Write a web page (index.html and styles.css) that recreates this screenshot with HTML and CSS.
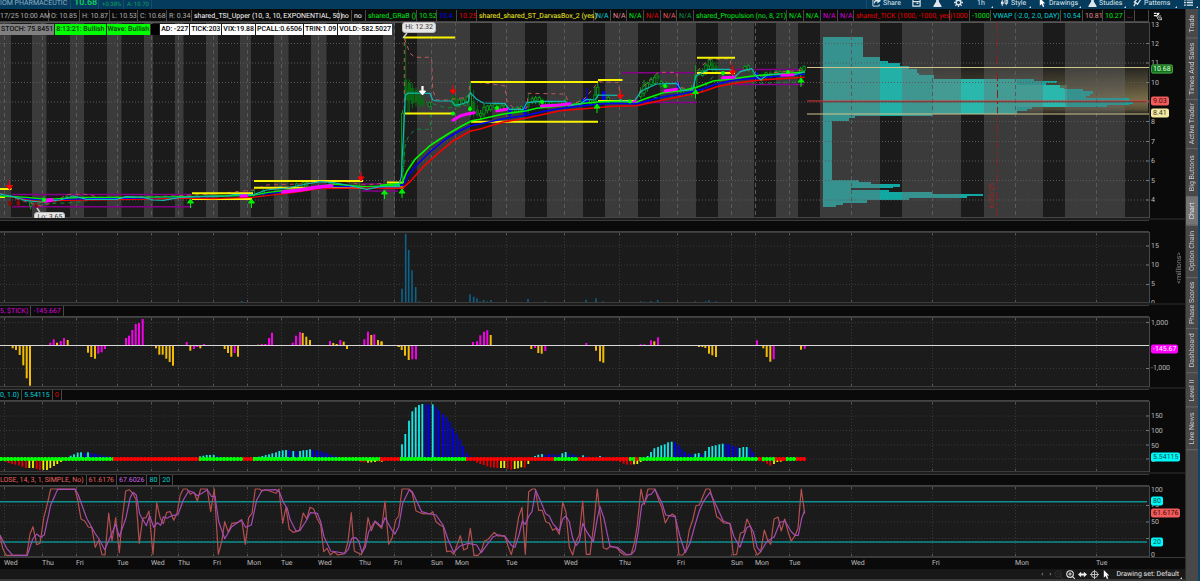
FILE: index.html
```
<!DOCTYPE html>
<html lang="en">
<head>
<meta charset="utf-8">
<title>Chart workspace</title>
<link rel="stylesheet" href="styles.css">
</head>
<body>
<header class="topbar">
  <div class="quote">
    <span class="company">IOM PHARMACEUTIC</span>
    <strong class="last">10.68</strong>
    <span class="pair"><span>+.04</span><span>+0.38%</span></span>
    <span class="pair bidask"><span>B: 10.65</span><span>A: 10.70</span></span>
  </div>
  <div class="tools">
    <button class="tool share"><svg class="ico" viewBox="0 0 10 10"><path d="M6 0l4 3-4 3V4C3 4 3 6 3 7 1 4 3 2 6 2z" fill="#dce6ec"/><path d="M2 2H1v7h7V7" fill="none" stroke="#dce6ec"/></svg>Share</button>
    <button class="tool cal" aria-label="Calendar"><svg class="ico" viewBox="0 0 10 10"><path d="M1 1h8v8H1zM1 4h8M5 6h2" fill="none" stroke="#dce6ec" stroke-width="1.3"/></svg></button>
    <button class="tool lab" aria-label="Add study"><svg class="ico" viewBox="0 0 10 10"><path d="M3 0h4v1H6.500v3L9.500 9v1H.5V9l3-5V1H3z" fill="#dce6ec"/></svg></button>
    <button class="tool gear" aria-label="Settings"><svg class="ico" viewBox="0 0 10 10"><circle cx="5" cy="5" r="2.500" fill="none" stroke="#dce6ec" stroke-width="1.600"/><path d="M5 0v2M5 8v2M0 5h2M8 5h2M1.500 1.500l1.400 1.400M7.100 7.100l1.400 1.400M8.500 1.500L7.100 2.900M2.900 7.100L1.500 8.500" stroke="#dce6ec" stroke-width="1.500"/></svg></button>
    <button class="tool hour more">1h</button>
    <button class="tool style more"><svg class="ico" viewBox="0 0 10 10"><path d="M2.500 2v7M7 0v8" stroke="#dce6ec"/><path d="M1 4h3v3H1z" fill="#dce6ec"/><path d="M5.500 2h3v4h-3z" fill="none" stroke="#dce6ec"/></svg>Style</button>
    <button class="tool draw more"><svg class="ico" viewBox="0 0 10 10"><path d="M2 0l6 6H5.500L7 9.500l-1.500.5L4 6.800 2 8.500z" fill="#fff"/></svg>Drawings</button>
    <button class="tool studies more"><svg class="ico" viewBox="0 0 10 10"><path d="M3 0h4v1H6.500v3L9.500 9v1H.5V9l3-5V1H3z" fill="#dce6ec"/></svg>Studies</button>
    <button class="tool patterns more"><svg class="ico" viewBox="0 0 10 10"><path d="M1 9l2-4 2 2 4-6M1 5l3-3" fill="none" stroke="#dce6ec" stroke-width="1.400"/></svg>Patterns</button>
    <button class="tool list more" aria-label="Menu"><svg class="ico" viewBox="0 0 10 10"><path d="M0 2h2M3 2h7M0 5h2M3 5h7M0 8h2M3 8h7" stroke="#dce6ec" stroke-width="1.400"/></svg></button>
  </div>
</header>
<div class="workspace">
  <main class="charts">
    <div class="studyrow"><div class="cells" id="studies"></div><button class="expand" aria-label="Swap axis"><svg class="ico" viewBox="0 0 10 10"><path d="M1 1.500h3M1 4h2.500M7 1L3.500 5" fill="none" stroke="#eee" stroke-width="1.300"/><circle cx="5.500" cy="2" r="1.300" fill="#eee"/><path d="M9 4.500C6 4 5 5 5 6.500S6 9 9 8.500M6 6.500h3.500V9" fill="none" stroke="#ccc"/></svg></button></div>

    <section class="panel price">
      <div class="plot"><svg id="price" viewBox="0 22 1149 196" preserveAspectRatio="none"></svg>
        <div class="stats">
          <span class="st grey">STOCH: 75.8451</span><span class="st lime">8:13:21: Bullish</span><span class="st lime">Wave: Bullish</span><span class="st blank"></span><span class="st">AD: -227</span><span class="st">TICK:203</span><span class="st">VIX:19.88</span><span class="st">PCALL:0.6506</span><span class="st">TRIN:1.09</span><span class="st">VOLD:-582.5027</span>
        </div>
        <span class="bubble hi">Hi: 12.32</span>
        <span class="bubble lo">Lo: 3.65</span>
        <span class="expiry">6/20/25</span>
      </div>
      <div class="axis" id="priceAxis"></div>
    </section>
    <div class="head"><div class="cells"></div></div>

    <section class="panel sub">
      <div class="plot"><svg id="volume" viewBox="0 232 1149 71" preserveAspectRatio="none"></svg></div>
      <div class="axis" id="volumeAxis"><span class="unit">&lt;millions&gt;</span></div>
    </section>
    <div class="head"><div class="cells"><span class="c magenta">5, $TICK)</span><span class="c magenta">-145.667</span></div></div>

    <section class="panel sub tickpanel">
      <div class="plot"><svg id="tick" viewBox="0 317 1149 70" preserveAspectRatio="none"></svg></div>
      <div class="axis" id="tickAxis"></div>
    </section>
    <div class="head"><div class="cells"><span class="c cyan">0, 1.0)</span><span class="c cyan">5.54115</span><span class="c red">0</span></div></div>

    <section class="panel sub">
      <div class="plot"><svg id="wave" viewBox="0 401 1149 71" preserveAspectRatio="none"></svg></div>
      <div class="axis" id="waveAxis"></div>
    </section>
    <div class="head"><div class="cells"><span class="c salmon">LOSE, 14, 3, 1, SIMPLE, No)</span><span class="c salmon">61.6176</span><span class="c violet">67.6026</span><span class="c cyan">80</span><span class="c cyan">20</span></div></div>

    <section class="panel sub">
      <div class="plot"><svg id="stoch" viewBox="0 486 1149 71" preserveAspectRatio="none"></svg></div>
      <div class="axis" id="stochAxis"></div>
    </section>
    <div class="timerow"><div class="times" id="times"></div></div>
    <footer class="footer">
      <div class="scroll"></div>
      <button class="fb arrow" aria-label="Scroll left">‹</button><button class="fb arrow" aria-label="Scroll right">›</button>
      <button class="fb dim" aria-label="Zoom out"><svg class="ico" viewBox="0 0 10 10"><circle cx="4.500" cy="4.500" r="3.500" fill="none" stroke="#333"/><path d="M7 7l3 3M3 4.500h3" stroke="#333"/></svg></button>
      <button class="fb" aria-label="Zoom in"><svg class="ico" viewBox="0 0 10 10"><circle cx="4.500" cy="4.500" r="3.700" fill="none" stroke="#ddd" stroke-width="1.200"/><path d="M7 7l3 3M2.500 4.500h4M4.500 2.500v4" stroke="#ddd" stroke-width="1.200"/></svg></button>
      <button class="fb" aria-label="Fit width"><svg class="ico" viewBox="0 0 10 10"><path d="M0 5l3.500-3v2h3V2L10 5 6.500 8V6h-3v2z" fill="#eee"/></svg></button>
      <button class="fb" aria-label="Crosshair"><svg class="ico" viewBox="0 0 10 10"><circle cx="5" cy="5" r="3.500" fill="none" stroke="#ccc"/><path d="M5 0v10M0 5h10" stroke="#ccc"/></svg></button>
      <button class="fb" aria-label="Pointer"><svg class="ico" viewBox="0 0 10 10"><path d="M2 0l6 6H5.500L7 9.500l-1.500.5L4 6.800 2 8.500z" fill="#fff"/></svg></button>
      <button class="fb set more">Drawing set: Default</button>
    </footer>
  </main>
  <nav class="tabs">
    <a href="#trade" class="trade">Trade</a><a href="#times" class="ts">Times And Sales</a><a href="#active" class="at">Active Trader</a><a href="#buttons" class="bb">Big Buttons</a><a href="#chart" class="ch on">Chart</a><a href="#option" class="oc">Option Chain</a><a href="#phase" class="ps">Phase Scores</a><a href="#dash" class="da">Dashboard</a><a href="#level" class="lv">Level II</a><a href="#news" class="ln">Live News</a><span class="rest"></span>
  </nav>
</div>
<script src="charts.js"></script>
</body>
</html>
```

FILE: styles.css
```
* { box-sizing: border-box; }
body { margin: 0; height: 100vh; display: flex; flex-direction: column; background: #0a0a0a; overflow: hidden; font: 7px/10px Roboto, "Noto Sans", sans-serif; color: #bcbcbc; text-rendering: geometricPrecision; }
button { font: inherit; color: inherit; background: none; border: 0; padding: 0; margin: 0; white-space: nowrap; text-rendering: inherit; }
a { color: inherit; text-decoration: none; }
.ico { width: 9px; height: 9px; flex: none; display: block; }

.topbar { height: 9px; flex: none; display: flex; justify-content: space-between; align-items: flex-end; overflow: hidden; background: #053b5c; color: #b8cedb; }
.quote, .tools { display: flex; align-items: flex-end; height: 20px; flex: none; }
.quote { border-right: 1px solid #174c6c; color: #10c060; }
.company { width: 71px; padding-bottom: 1px; color: #8db0c4; border-right: 1px solid #174c6c; height: 20px; display: flex; align-items: flex-end; white-space: nowrap; }
.last { width: 28px; padding: 0 0 1px 3px; font-size: 9px; line-height: 9px; display: flex; align-items: flex-end; border-right: 1px solid #174c6c; height: 20px; }
.pair { display: flex; flex-direction: column; width: 25px; padding: 0 0 1px 3px; font-size: 6px; line-height: 6px; color: #0da060; border-right: 1px solid #174c6c; height: 20px; justify-content: flex-end; white-space: nowrap; }
.bidask { width: 27px; border: 0; }
.tools { border-left: 1px solid #174c6c; padding-left: 5px; }
.tool { display: flex; align-items: center; gap: 2px; height: 12px; position: relative; padding-bottom: 1px; color: #dfeaf1; }
.share { width: 40px; }
.cal, .lab { width: 21px; }
.gear { width: 23px; }
.hour { width: 23px; }
.style { width: 38px; }
.draw { width: 50px; }
.studies { width: 45px; }
.patterns { width: 51px; }
.list { width: 16px; }
.more::after { content: ""; position: absolute; right: 7px; bottom: 1px; border: 1px solid #dde; border-left-color: transparent; border-top-color: transparent; }
.list::after { right: 2px; }

.workspace { flex: 1; display: flex; min-height: 0; border-right: 2px solid #0e4668; }
.charts { flex: 1; min-width: 0; display: flex; flex-direction: column; }
.studyrow { display: flex; height: 13px; flex: none; padding-top: 1px; }
.cells { flex: 1; min-width: 0; display: flex; overflow: hidden; border-bottom: 1px solid #444; }
#studies { display: grid; }
.expand { width: 36px; padding-left: 4px; }
.c { padding: 0 2px 0 1px; border-right: 1px solid #484848; white-space: nowrap; line-height: 12px; }
.studyrow .c { padding: 0 0 0 2px; min-width: 0; }
.studyrow .c:first-child { padding-left: 0; }
.head { height: 14px; flex: none; display: flex; padding: 2px 36px 0 0; background: linear-gradient(#1d1d1d 2px, #0a0a0a 2px); }
.head .cells { border-top: 1px solid #3a3a3a; }
.head .c { margin-right: 1px; line-height: 11px; }
.head .c:first-child { padding-left: 0; }
.grey-t { color: #b0b0b0; } .white { color: #fafafa; } .green { color: #00e818; } .dgreen { color: #109a48; }
.blue { color: #0000ff; } .red { color: #e40000; } .yellow { color: #f4f020; } .cyan { color: #00d6da; }
.pink { color: #e88c9c; } .salmon { color: #e86060; } .magenta { color: #dc00dc; } .violet { color: #cc66e0; }

.panel { display: flex; min-height: 0; }
.price { flex: 196 1 0; }
.sub { flex: 71 1 0; }
.tickpanel { flex-grow: 70; }
.plot { flex: 1; min-width: 0; position: relative; background: #1b1b1b; overflow: hidden; }
.plot > svg { display: block; width: 100%; height: 100%; }
.axis { width: 36px; flex: none; position: relative; overflow: hidden; border-left: 1px solid #484848; }
.price .axis { overflow: visible; }
.lab-y { position: absolute; left: 1px; transform: translateY(-50%); white-space: nowrap; line-height: 10px; }
.chip { border-radius: 2px; padding: 0 2px; line-height: 9px; }
.chip.cg { background: #0c7414; color: #e8ffe8; outline: 1px solid #4b9c4b; outline-offset: -1px; }
.chip.cr { background: #f25c5c; color: #3a0808; }
.chip.cy { background: #f6e9a0; color: #333; }
.chip.cm { background: #ff00ff; color: #fff; }
.chip.cc { background: #00f8f8; color: #064a4a; }
.unit { position: absolute; right: 1px; top: 28%; writing-mode: vertical-rl; transform: rotate(180deg); line-height: 9px; color: #888; }

.stats { position: absolute; left: 0; top: 2px; height: 11px; display: flex; gap: 1px; font-weight: 500; line-height: 11px; }
.st { background: #fff; color: #000; white-space: nowrap; padding: 0 1px; }
.grey { background: #808080; color: #101010; }
.lime { background: #00ff00; color: #033a03; }
.blank { background: #000; width: 8px; }
.bubble { position: absolute; background: #e6e6e6; color: #333; border-radius: 3px; line-height: 9px; padding: 0 2px; border: 1px solid #bbb; white-space: nowrap; }
.hi { left: 35%; top: 0; }
.lo { left: 3%; bottom: -5px; }
.expiry { position: absolute; left: 86%; bottom: 5%; writing-mode: vertical-rl; transform: rotate(180deg); color: #a82424; line-height: 8px; }

.timerow { height: 12px; flex: none; padding-right: 36px; border-top: 1px solid #3a3a3a; }
.times { position: relative; height: 11px; }
.times span { position: absolute; top: 0; }
.footer { height: 12px; flex: none; display: flex; align-items: center; background: #181818; border-bottom: 2px solid #3a3a3a; padding-right: 3px; color: #e4e4e4; }
.scroll { flex: 1; }
.fb { width: 12px; flex: none; }
.fb.arrow { width: 8px; color: #aaa; }
.fb.set { width: auto; position: relative; padding: 0 3px 0 2px; }
.set.more::after { right: 0; bottom: 0; }

.tabs { width: 13px; flex: none; display: flex; flex-direction: column; background: #484848; border-left: 1px solid #2c2c2c; color: #cccccc; }
.tabs a { writing-mode: vertical-rl; transform: rotate(180deg); display: flex; align-items: center; justify-content: center; line-height: 12px; border-top: 1px solid #666; white-space: nowrap; min-height: 0; }
.tabs .on { background: #747474; color: #e4e4e4; }
.trade { flex: 29 1 0; } .ts { flex: 61 1 0; } .at { flex: 50 1 0; } .bb { flex: 47 1 0; } .ch { flex: 28 1 0; }
.oc { flex: 53 1 0; } .ps { flex: 51 1 0; } .da { flex: 44 1 0; } .lv { flex: 33 1 0; } .ln { flex: 43 1 0; } .rest { flex: 133 1 0; }
```

FILE: charts.js
```
const $ = id => document.getElementById(id);
const W = 1149;

/* Study label row: text, colour class, share of the row */
const studies = [
  ['17/25 10:00 AM','grey-t',49],['O: 10.85','grey-t',31],['H: 10.87','grey-t',30],['L: 10.53','grey-t',28],['C: 10.68','grey-t',29],['R: 0.34','grey-t',25],
  ['shared_TSI_Upper (10, 3, 10, EXPONENTIAL, 50)','white',147],['no','white',13],['no','white',14],['shared_GRaB ()','green',51],['10.52','green',20],['10.4','blue',20],['10.25','red',20],
  ['shared_shared_ST_DarvasBox_2 (yes)','yellow',117],['N/A','cyan',17],['N/A','pink',16],['N/A','green',17],['N/A','red',17],['N/A','salmon',16],['N/A','dgreen',17],
  ['shared_Propulsion (no, 8, 21)','green',93],['N/A','green',17],['N/A','green',17],['N/A','magenta',17],['N/A','magenta',16],['shared_TICK (1000, -1000, yes)','red',96],['1000','red',20],['-1000','green',21],
  ['VWAP (-2.0, 2.0, DAY)','cyan',70],['10.54','cyan',22],['10.81','pink',20],['10.27','green',22],['...','salmon',10],['','white',14]];
$('studies').style.gridTemplateColumns = studies.map(s => `minmax(0, ${s[2]}fr)`).join(' ');
$('studies').innerHTML = studies.map(([t, k]) => `<span class="c ${k}">${t}</span>`).join('');

/* Day lines and time labels */
const days = [[4,'Wed'],[42,'Thu'],[76,'Fri'],[117,'Tue'],[151,'Wed'],[178,'Thu'],[213,'Fri'],[247,'Mon'],[281,'Tue'],[318,'Wed'],[359,'Thu'],[394,'Fri'],[431,'Sun'],[455,'Mon'],[506,'Tue'],[564,'Wed'],[619,'Thu'],[677,'Fri'],[731,'Sun'],[755,'Mon'],[789,'Tue'],[851,'Wed'],[932,'Fri'],[1015,'Mon'],[1096,'Tue']];
$('times').innerHTML = days.map(([x, t]) => `<span style="left:${(x / W * 100).toFixed(2)}%">${t}</span>`).join('');

const line = (x1, y1, x2, y2, c, w = 1, extra = '') => `<path d="M${x1} ${y1}L${x2} ${y2}" stroke="${c}" stroke-width="${w}" ${extra}/>`;
const poly = (pts, c, w = 1, extra = '') => `<polyline points="${pts}" fill="none" stroke="${c}" stroke-width="${w}" stroke-linejoin="round" ${extra}/>`;
const rect = (x, y, w, h, c, extra = '') => `<rect x="${x}" y="${y}" width="${w}" height="${h}" fill="${c}" ${extra}/>`;
/* Points stored at three units per pixel, from a given origin */
const scale = (s, ox, oy) => s.trim().split(/\s+/).map(p => { const [x, y] = p.split(','); return (ox + x / 3).toFixed(1) + ',' + (oy + y / 3).toFixed(1); }).join(' ');

function grid(top, h, ys, c, dash) {
  let s = days.map(([x]) => line(x + .5, top, x + .5, top + h, c, 1, `stroke-dasharray="${dash}"`)).join('');
  s += ys.map(y => line(0, y, 1147, y, c, 1, 'stroke-dasharray="1 2"')).join('');
  return s;
}
const ticks = (top, h) => days.map(([x]) => line(x + .5, top, x + .5, top + 3, '#555') + line(x + .5, top + h - 3, x + .5, top + h, '#555')).join('') + line(0, top + .5, W, top + .5, '#3c3c3c') + line(0, top + h - .5, W, top + h - .5, '#3c3c3c');
const edge = (ys) => ys.map(y => line(1146, y, W, y, '#777')).join('');

/* Bars: "k x,y x,y" where k selects the colour */
function bars(str, ox, oy, base, w, pal) {
  let k = 'y', s = '';
  for (const t of str.trim().split(/\s+/)) {
    if (pal[t]) { k = t; continue; }
    const [x, y] = t.split(',').map(Number);
    const b = (base - oy) * 3, px = ox + x / 3 - w / 2;
    s += rect(px.toFixed(1), (oy + Math.min(y, b) / 3).toFixed(1), w, Math.max(.6, Math.abs(y - b) / 3).toFixed(1), pal[k]);
  }
  return s;
}

/* ---------- Price ---------- */
const light = [[0,11],[32,46.5],[70,84],[107,121.5],[144,153],[175,183.5],[206,218],[240,251],[274,288.5],[311,326.5],[349,361.5],[383,395],[417,470],[492,525],[547,583],[605,638],[660,696],[718,754],[776,798],[820,880],[902,961],[984,1043],[1065,1125]];
const profile = '823,37 863,37 863,57 880,57 880,61 888,61 888,63 900,63 900,66 909,66 909,69 917,69 917,73 919,73 919,75 934,75 934,79 1034,79 1034,81 1057,81 1057,83 1046,83 1046,85 1060,85 1060,88 1064,88 1064,89 1083,89 1083,91 1093,91 1093,94 1090,94 1090,96 1086,96 1086,98 1129,98 1129,101 1133,101 1133,104 1129,104 1129,105 1107,105 1107,107 1032,107 1032,109 1027,109 1027,111 1017,111 1017,114 933,114 933,116 855,116 855,118 849,118 849,121 832,121 832,180 859,180 859,182 871,182 871,184 900,184 900,187 893,187 893,188 851,188 851,190 889,190 889,192 932,192 932,194 983,194 983,196 967,196 967,198 909,198 909,200 867,200 867,203 843,203 843,205 836,205 836,207 823,207';
const P = s => scale(s, 380, 0);
const Q = s => scale(s, 0, 0);
const arrow = (x, y, c, up) => { const d = up ? -1 : 1; return `<path d="M${x} ${y - 5 * d}V${y}M${x - 3} ${y}H${x + 3}L${x} ${y + 4 * d}z" fill="${c}" stroke="${c}"/>`; };

/* x, high, low, open, close, colour: g hollow green, d dark green, b blue, r dark red */
const candles = `68,330,540,340,500,g 77,115,340,240,300,d 84,262,340,275,300,d 88,238,345,250,300,d 97,250,325,265,310,d 108,262,320,272,305,d 118,275,325,285,312,d 128,285,320,300,315,d 148,305,322,308,319,g
218,285,320,292,315,d 228,285,325,295,318,d 238,295,322,300,316,g 250,295,315,300,310,g 262,285,312,290,305,g 271,245,350,280,320,g 281,270,352,305,340,d 292,315,350,330,345,d 302,330,356,340,348,g 312,312,350,322,342,g 322,315,340,318,332,g 332,312,335,317,328,g 345,308,330,313,322,g 356,310,332,315,325,d 366,312,335,318,330,g 376,310,330,316,326,g 390,322,350,328,345,b 400,322,340,325,336,g 412,318,340,322,335,g 424,316,338,320,330,g 435,310,345,320,340,b 445,280,340,305,320,d 457,290,312,296,305,g 467,288,312,293,302,g 478,288,315,293,306,g 488,295,318,300,312,d 500,302,318,305,314,g 512,304,320,307,315,g 525,302,320,306,316,d 540,302,318,306,314,g 556,296,318,302,312,g 568,305,318,307,315,b 600,298,320,304,314,g 610,295,315,298,308,b 620,265,315,296,308,b 632,295,318,300,312,g 645,260,318,285,310,g 653,242,295,262,285,g 671,275,300,275,298,b 685,288,310,292,304,g 745,298,310,301,307,g
782,262,296,275,290,g 792,240,290,255,280,g 802,245,275,250,266,g 813,232,260,238,254,g 824,225,255,232,250,g 834,216,245,225,236,d 844,240,262,245,258,g 860,245,265,250,260,g 895,245,265,248,262,b 907,262,285,268,280,g 920,265,285,270,280,d 935,255,290,265,280,g 947,195,275,225,262,g 958,205,230,210,224,d 968,205,230,212,226,g 978,190,225,195,215,g 988,173,210,180,198,g 998,178,220,190,210,d 1008,185,220,198,212,d 1055,190,240,205,225,r 1095,196,215,200,208,g 1105,193,215,198,210,g 1118,205,230,210,222,d 1130,215,240,220,235,b 1145,225,245,228,240,g 1158,215,240,218,232,g 1172,212,235,218,230,d 1188,210,230,214,226,g 1200,210,232,216,228,g 1212,208,228,212,224,d 1225,210,230,215,226,g 1240,212,235,218,230,d 1262,200,235,206,225,g 1272,196,225,200,212,g
-1110,602,620,605,615,r -1085,598,620,603,615,r -1048,605,628,608,618,g -1030,605,625,606,620,r -1008,588,606,594,603,g -940,585,600,590,596,g -920,588,602,591,598,d -380,568,590,572,584,g -350,568,590,572,582,g -300,556,576,562,572,g -250,548,570,552,566,g -230,545,568,548,562,g -220,543,560,548,556,g -150,548,562,551,558,g -70,552,568,556,564,d`;
const cc = { g: '#00a81c', d: '#0a6a14', b: '#0000ff', r: '#8a0a0a' };
const drawCandles = candles.trim().split(/\s+/).map(t => {
  const a = t.split(','), x = 380 + a[0] / 3, c = cc[a[5]], f = a[5] === 'g' ? '#1b1b1b' : c;
  return line(x.toFixed(1), a[1] / 3, x.toFixed(1), a[2] / 3, c, 1) + `<rect x="${(x - 1.2).toFixed(1)}" y="${(a[3] / 3).toFixed(1)}" width="2.4" height="${((a[4] - a[3]) / 3).toFixed(1)}" fill="${f}" stroke="${c}" stroke-width=".8"/>`;
}).join('');

const yl = (x1, x2, y) => line(x1, y, x2, y, '#f8f400', 2);
const pl = (x1, x2, y) => line(x1, y, x2, y, '#86008a', 1.5);
const mg = (s, w = 3) => poly(s, '#ff00ff', w, 'stroke-linecap="round"');
const dot = (x, y, c = '#00ff00', r = 2) => `<circle cx="${x}" cy="${y}" r="${r}" fill="${c}"/>`;

$('price').innerHTML = `<defs>
<linearGradient id="va" x1="0" y1="0" x2="0" y2="1"><stop offset="0" stop-color="#b8a468" stop-opacity=".08"/><stop offset=".72" stop-color="#b8a468" stop-opacity=".62"/><stop offset=".9" stop-color="#b8a468" stop-opacity=".4"/><stop offset="1" stop-color="#b8a468" stop-opacity=".05"/></linearGradient>
<linearGradient id="fade" x1="0" x2="1"><stop offset="0" stop-color="#fff" stop-opacity=".25"/><stop offset="1" stop-color="#fff" stop-opacity="1"/></linearGradient>
<mask id="m"><rect x="808" y="67" width="340" height="48" fill="url(#fade)"/></mask></defs>`
+ rect(0, 22, W, 196, '#1b1b1b')
+ `<rect x="823" y="67" width="325" height="47" fill="url(#va)" mask="url(#m)"/>`
+ `<polygon points="${profile}" fill="#12a8a2"/>`
+ `<rect x="823" y="67" width="110" height="48" fill="#6fd8c0" opacity=".18"/><rect x="933" y="79" width="84" height="35" fill="#6fe8c8" opacity=".25"/><rect x="1017" y="85" width="50" height="22" fill="#6fe8c8" opacity=".25"/>`
+ light.map(([a, b]) => rect(a, 22, b - a, 196, '#707070', 'opacity=".39"')).join('')
+ grid(22, 196, [43.5, 63, 82.5, 102, 121.5, 141.5, 161, 180.5, 200], '#5a5a5a', '4 3')
+ line(0, 22.5, W, 22.5, '#555')
+ line(997.5, 22, 997.5, 218, '#8c2020', 1, 'stroke-dasharray="8 3 3 3"')
+ pl(12, 192, 194.5) + pl(12, 192, 206.8) + pl(362, 383, 184) + pl(362, 398, 191) + pl(622, 697, 72.7) + pl(637, 697, 102.5) + pl(735, 804, 69.5) + pl(735, 804, 84.5)
+ drawCandles
+ poly(P('73,330 73,115 90,160 105,172 150,172 155,180 158,270 170,300 215,300'), '#c05a5a', 1, 'stroke-dasharray="4 4"')
+ poly(P('68,540 75,440 85,410 105,388 150,388 155,310 200,325 262,315'), '#0c8a3c', 1, 'stroke-dasharray="4 4"')
+ poly(P('215,298 265,292 270,245 320,250 375,258 380,300 400,325 440,325 445,280 555,282 570,315 610,300 640,265 655,245 715,248 722,300'), '#c05a5a', 1, 'stroke-dasharray="4 4"')
+ poly(P('765,300 790,260 835,217 890,217 897,262 940,270 950,215 985,178 1050,176 1060,230 1100,205 1135,235 1180,218 1270,210'), '#c05a5a', 1, 'stroke-dasharray="4 4"')
+ poly(P('655,305 760,310 800,295 850,290 905,285 960,280 1010,215 1060,245 1140,250 1270,245'), '#0c8a3c', 1, 'stroke-dasharray="4 4"')
+ poly(Q('0,580 60,600 120,618 160,608 200,584 250,582 300,592 460,590 520,588 640,582 760,570 800,555 900,552 960,545 1040,545 1090,555 1150,550'), '#b05050', 1, 'stroke-dasharray="4 4"')
+ poly(Q('40,592 110,612 220,608 300,596 450,598 570,592 700,588'), '#0c8a3c', 1, 'stroke-dasharray="4 4"')
+ yl(0, 11.5, 189) + yl(0, 5, 197) + yl(192, 253, 193.3) + yl(192, 252, 199) + yl(254, 363, 181) + yl(254, 363, 187.8) + yl(387, 404, 182.5) + yl(380, 404, 187.5)
+ yl(404, 455, 37.5) + yl(404, 453, 113.5) + yl(471, 598, 82) + yl(471, 598, 121.7) + yl(598, 622.5, 80) + yl(598, 635, 101) + yl(697, 735, 57.7) + yl(697, 735, 73)
+ poly(Q('0,584 120,606 170,602 240,600 400,598 560,594 640,596 760,592 880,578 960,566 1090,564 1200,564'), '#f00000', 1.3)
+ poly(P('0,565 70,563 90,545 130,500 180,455 220,422 270,394 300,387 370,366 440,354 540,332 650,323 700,319 770,317 850,300 910,288 965,276 1010,260 1065,250 1140,240 1200,236 1274,232'), '#f80000', 1.6)
+ poly(Q('0,584 100,598 180,598 400,594 600,590 760,586 880,572 1000,560 1200,560'), '#0000f8', 1.3)
+ poly(P('0,560 70,555 84,528 105,500 150,456 200,415 240,392 270,378 300,372 370,356 440,346 500,332 570,322 650,313 700,310 770,311 850,290 910,281 965,268 1010,252 1065,240 1140,233 1200,228 1274,222'), '#0000f8', 1.6)
+ poly(Q('0,588 80,592 140,598 240,592 400,592 560,590 660,588 760,586 800,578 880,568 960,560 1000,552 1090,560 1200,556'), '#00f000', 1.3)
+ poly(P('0,556 66,550 80,515 105,478 150,437 180,417 215,395 245,378 275,362 300,358 370,342 440,332 470,325 540,318 590,312 650,306 710,304 770,306 800,295 850,278 905,272 950,262 1000,243 1060,236 1100,230 1140,226 1200,222 1274,216'), '#00f800', 1.6)
+ poly(P('40,555 58,553 64,530 73,350 76,285 85,279 150,280 158,300 170,303 215,303 225,316 245,312 265,305 271,278 290,298 310,309 375,311 388,328 430,328 440,308 480,304 555,304 565,318 600,312 620,298 645,300 655,285 715,286 725,303 762,305 785,272 830,252 890,250 905,272 938,270 948,228 985,208 1050,208 1062,235 1080,215 1115,206 1130,230 1142,240 1160,225 1200,222 1240,225 1274,216'), '#12b8b8', 1.2)
+ poly(Q('0,582 40,590 80,602 120,606 180,600 220,588 260,598 350,598 380,590 430,592 460,600 490,601 540,592 600,590 680,588 700,584 760,584 800,570 860,564 920,552 960,545 1000,548 1040,555 1100,568 1140,560 1200,560'), '#12b8b8', 1.2)
+ mg(Q('135,602 155,600'), 4) + mg(Q('722,588 740,587')) + mg(Q('848,576 900,570 950,562 995,557'), 3.5)
+ mg(P('219,361 240,348 262,342 283,338')) + mg(P('350,332 380,328')) + mg(P('484,318 530,316 570,311')) + mg(P('855,273 890,268')) + mg(P('1027,233 1062,232')) + mg(P('1205,226 1240,224')) + mg(P('760,305 768,303'), 2)
+ dot(453, 113.5) + dot(497, 108) + dot(542, 102) + dot(630, 101.5) + dot(665, 86) + dot(723, 73) + dot(788, 72) + dot(44, 200) + dot(470, 109)
+ arrow(9.5, 185.5, '#f00', 0) + arrow(361, 177, '#f00', 0) + arrow(453, 90, '#f00', 0) + arrow(620.5, 95, '#f00', 0) + arrow(732.5, 71, '#f00', 0) + arrow(422.5, 91, '#fff', 0) + line(422.5, 86, 422.5, 92, '#fff', 2.2)
+ arrow(190.5, 203, '#00f000', 1) + arrow(251.5, 203, '#00f000', 1) + arrow(384.5, 194, '#00f000', 1) + arrow(402, 193, '#00f000', 1) + arrow(597, 108, '#00f000', 1) + arrow(695.5, 93.5, '#00f000', 1) + arrow(801, 82, '#00f000', 1)
+ line(807, 67.5, W, 67.5, '#cfc48a') + line(807, 114, W, 114, '#cfc48a') + line(807, 101, W, 101, '#d84040', 1.2) + line(807, 101.8, W, 101.8, '#7a2020', .8)
+ '<path d="M403 38l4-5M41 214l-4-6" stroke="#ccc" stroke-width="1.5"/>'
+ edge([43.5, 63, 82.5, 102, 121.5, 141.5, 161, 180.5, 200]) + line(0, 217.5, W, 217.5, '#444');

/* ---------- Volume ---------- */
$('volume').innerHTML = grid(232, 71, [246, 265, 284.5], '#383838', '1 2')
+ bars('v 66,191 77,27 86,75 96,136 107,186 118,229 270,208 281,215 291,220 300,229 311,225 322,229 333,225 434,231 444,222 454,231 465,231 475,231 485,231 495,229 607,231 618,224 628,231 648,220 659,231 669,229 680,231 782,229 792,230 813,228 823,231 833,225 946,229 956,231 966,231 977,229 987,226 997,231 1007,229 1120,231 1140,231 1181,231 -415,228 -211,231', 380, 225, 302.7, 1.6, { v: '#0d628a' })
+ ticks(232, 71) + edge([246, 265, 284.5]);

/* ---------- Tick ---------- */
const tp = { y: '#f0bc08', m: '#f400e8' };
$('tick').innerHTML = grid(317, 70, [322.5, 368.5], '#383838', '1 2')
+ bars('y 38,370 48,375 59,390 70,421 80,460 90,482 m 151,353 161,343 y 171,353 m 182,348 192,339 y 203,345 264,383 274,396 285,401 m 295,386 305,382 315,372 378,339 387,332 397,315 407,297 417,294 428,282 y 468,370 478,389 488,389 499,401 509,411 519,422 m 560,351 y 571,377 m 582,372 592,366 y 601,370 m 612,357 y 674,372 684,384 694,395 m 704,384 y 714,395 775,359 m 786,357 796,357 807,339 816,323 878,353 888,332 900,321 y 908,324 919,335 930,345 m 990,348 y 1000,354 1010,357 m 1021,345 y 1031,350 1041,372 m 1093,343 1104,320 y 1114,330 m 1123,328 y 1134,345 1144,350 1196,366', 0, 225, 345.4, 2, tp)
+ bars('y 5,349 56,366 65,375 75,392 86,405 m 97,403 108,403 279,351 291,349 301,331 312,320 322,316 y 332,330 454,372 m 465,369 y 475,384 485,386 m 496,378 619,354 y 648,377 660,409 670,413 m 782,358 793,358 813,346 y 823,349 m 834,337 y 957,366 967,366 976,369 987,386 997,391 1008,396 m 1131,346 y 1150,370 1160,396 1171,410 m 1181,403 y 1263,374 m 1274,371', 380, 225, 345.4, 2, tp)
+ line(0, 345.5, W, 345.5, '#d8d8d8') + ticks(317, 70) + edge([322.5, 368.5]);

/* ---------- Wave ---------- */
const wp = { c: '#14e8e8', b: '#0000e8', r: '#e80000', y: '#f0f000' };
const dots = [[0,113,'g'],[113,199,'r'],[199,243,'g'],[243,253,'r'],[253,380,'g'],[380,400,'r'],[400,466,'g'],[466,554,'r'],[554,578,'g'],[578,629,'r'],[629,635,'g'],[635,639,'r'],[639,758,'g'],[758,762,'r'],[762,775,'g'],[775,786,'r'],[786,796,'g'],[796,806,'r']];
$('wave').innerHTML = grid(401, 71, [416, 430.5, 445, 459], '#383838', '1 2')
+ bars('r 17,231 26,234 36,237 46,239 57,241 67,245 78,249 y 88,249 99,249 r 110,252 120,255 y 130,255 141,255 151,249 162,243 172,237 183,231 c 212,212 222,208 233,203 243,202 b 254,204 c 264,202 b 275,205 285,207 295,208 305,211 315,213 326,214 336,216 c 600,214 610,212 620,210 630,210 641,209 b 652,213 662,215 c 767,216 777,215 787,213 797,210 807,208 817,205 828,202 838,198 848,196 858,195 b 868,196 c 880,198 b 889,199 c 900,198 910,196 920,195 930,193 b 940,195 951,197 961,199 971,202 981,205 991,209 1002,212 1012,215 r 1083,231 1093,232 y 1104,233 1114,232 1125,231 r 1135,230 1145,229', 0, 385, 459, 1.8, wp)
+ bars('y 5,230 c 66,178 76,147 87,107 97,79 107,67 117,60 127,57 b 138,58 148,59 c 158,58 b 168,66 178,77 189,88 199,96 209,110 219,130 229,145 240,163 250,183 260,204 270,212 r 291,233 301,237 311,240 322,244 332,247 342,248 352,249 y 363,249 373,249 r 383,251 394,254 y 404,252 414,250 424,247 r 434,248 y 445,237 c 465,213 475,209 486,207 b 497,209 507,208 517,208 527,209 537,210 c 547,205 557,201 b 568,206 578,209 588,210 c 609,211 b 619,214 c 660,213 b 670,215 r 721,231 731,236 741,239 752,239 y 762,238 772,237 782,231 c 803,213 813,201 823,190 834,186 844,181 854,178 864,172 875,170 b 885,172 895,181 905,192 915,201 926,206 936,208 c 946,206 956,204 b 966,207 c 976,198 987,186 997,183 1007,181 1018,178 1028,176 b 1038,176 1048,178 1058,182 1069,186 c 1079,189 1090,186 1100,186 b 1110,190 1120,202 r 1151,231 1161,236 1171,242 y 1182,237 1192,231 1202,230', 380, 385, 459, 1.8, wp)
+ dots.map(([a, b, k]) => line(a, 459, b, 459, k === 'g' ? '#00f400' : '#f00000', 2.4) + line(a, 459, b, 459, k === 'g' ? '#00ff00' : '#ff0000', 4, 'stroke-dasharray="2.4 1"')).join('')
+ ticks(401, 71) + edge([416, 430.5, 445, 459]);

/* ---------- Stochastic ---------- */
const S1 = s => scale(s, 0, 385), S2 = s => scale(s, 380, 385);
$('stoch').innerHTML = grid(486, 71, [505.5, 522, 538.5], '#383838', '1 2')
+ line(0, 501.8, 1147, 501.8, '#0c9090', 1.6) + line(0, 542, 1147, 542, '#0c9090', 1.6)
+ poly(S1('0,452 8,490 18,511 80,511 90,447 99,425 110,479 120,475 132,395 140,365 152,312 225,312 233,345 243,402 254,408 265,426 275,428 286,487 296,466 306,509 315,510 326,384 336,468 347,398 358,503 367,400 377,318 388,314 398,325 408,343 418,475 428,400 438,398 447,378 459,508 470,353 481,400 490,416 500,382 511,380 521,406 531,385 541,330 550,312 561,312 571,328 582,322 592,348 602,312 622,312 632,380 643,312 655,508 665,470 674,410 685,442 696,415 715,412 725,404 736,478 746,398 756,385 766,312 778,312 787,318 798,314 828,325 837,312 848,415 858,366 868,433 880,442 898,437 910,384 920,402 930,367 941,372 952,402 962,420 971,500 981,490 991,510 1002,500 1014,510 1034,506 1044,470 1054,383 1063,498 1084,509 1094,480 1104,398 1114,437 1125,410 1145,430')
  + ' ' + S2('15,348 26,478 36,460 47,405 56,393 66,312 88,312 97,325 108,378 128,386 150,387 158,380 168,410 180,420 190,425 200,500 212,498 221,508 231,480 241,452 251,495 262,490 271,430 282,511 294,511 304,500 313,468 323,464 343,442 354,453 374,452 385,485 394,509 405,465 416,395 426,367 436,508 446,320 457,312 466,312 476,376 487,376 497,410 508,415 518,436 528,430 538,448 548,352 558,382 568,487 578,510 588,470 598,450 608,348 619,508 630,508 641,420 652,312 662,405 670,488 680,493 692,483 712,490 722,502 733,510 753,509 764,470 772,420 783,312 793,358 804,312 825,312 836,345 846,370 856,414 866,395 877,387 886,394 897,510 908,510 918,495 928,435 938,405 948,362 958,360 968,335 978,312 989,312 999,345 1010,395 1020,402 1031,414 1050,415 1060,510 1070,508 1081,445 1092,440 1101,402 1112,425 1122,488 1132,510 1142,500 1153,435 1163,466 1172,478 1182,402 1194,396 1204,438 1214,402 1224,440 1234,468 1245,452 1254,430 1264,312 1274,386'), '#b45050', 1.2)
+ poly(S1('0,450 20,490 38,511 82,511 98,462 110,447 122,457 133,450 152,360 173,313 226,313 235,330 260,400 285,445 297,462 314,494 330,458 347,418 358,455 378,398 390,340 399,322 409,330 419,388 428,403 439,422 449,392 461,427 472,413 482,421 490,395 500,400 515,392 534,389 550,345 566,317 580,322 592,332 606,325 622,314 634,334 645,334 656,410 674,461 695,425 724,405 737,427 754,420 770,345 787,315 828,314 838,320 850,352 862,370 870,403 888,438 900,436 920,405 931,383 952,385 962,410 972,455 992,498 1012,501 1034,505 1045,493 1055,460 1067,458 1076,468 1086,503 1096,487 1106,440 1125,408 1145,425 1155,398')
  + ' ' + S2('36,436 45,447 56,425 68,355 88,314 97,320 125,380 150,387 168,390 190,422 205,465 221,502 240,483 265,475 290,480 304,503 322,478 340,455 356,449 376,455 395,482 405,487 417,450 427,408 436,418 447,392 456,380 467,316 480,345 497,386 508,393 518,415 538,438 548,402 558,393 568,410 578,460 588,482 598,470 608,415 620,440 640,470 652,400 660,365 672,400 690,485 712,487 740,509 755,507 765,495 775,440 785,360 795,350 804,330 813,328 825,314 845,352 857,390 885,395 900,455 916,503 930,475 945,420 958,378 970,350 990,322 1010,365 1030,408 1050,416 1062,455 1080,487 1100,428 1110,423 1120,440 1132,488 1142,500 1160,470 1183,455 1200,412 1215,408 1234,440 1245,451 1255,451 1265,400 1274,376'), '#a44cb4', 1.2)
+ ticks(486, 71) + edge([505.5, 522, 538.5]);

/* ---------- Axis labels: y, text, chip colour ---------- */
function axis(id, top, h, items) {
  $(id).insertAdjacentHTML('beforeend', items.map(([y, t, k]) => `<span class="lab-y ${k ? 'chip ' + k : ''}" style="top:${((y - top) / h * 100).toFixed(2)}%">${t}</span>`).join(''));
}
axis('priceAxis', 22, 196, [[24.5,'13'],[43.5,'12'],[63,'11'],[82.5,'10'],[122,'8'],[141.5,'7'],[161,'6'],[180.5,'5'],[200,'4'],[69,'10.68','cg'],[101,'9.03','cr'],[113.5,'8.41','cy']]);
axis('volumeAxis', 232, 71, [[246,'15'],[265,'10'],[284.5,'5'],[303,'0']]);
axis('tickAxis', 317, 70, [[322.5,'1,000'],[368.5,'-1,000'],[348.5,'-145.67','cm']]);
axis('waveAxis', 401, 71, [[416.5,'150'],[430.5,'100'],[445.5,'50'],[460,'0'],[456.5,'5.54115','cc']]);
axis('stochAxis', 486, 71, [[489.5,'100'],[505.5,'75'],[522,'50'],[555,'0'],[501,'80','cc'],[513.5,'61.6176','cr'],[541.5,'20','cc']]);
```
